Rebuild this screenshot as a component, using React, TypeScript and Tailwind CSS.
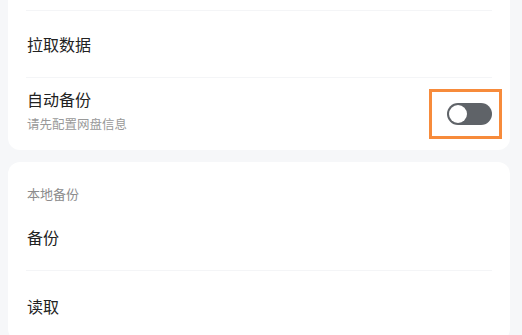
export default function App() {
  return (
    <div
      className="h-[335px] w-[522px] overflow-hidden bg-[#f6f7f9] pl-2 pr-3"
      style={{ fontFamily: '"Noto Sans CJK SC", "Noto Sans", sans-serif' }}
    >
      <div className="rounded-b-[12px] bg-white">
        <div className="h-[10px]" />
        <div className="mx-[18px] h-px bg-[#f4f5f7]" />
        <div className="flex h-[66px] items-center px-[19px] text-[16px] text-[#222]">拉取数据</div>
        <div className="mx-[18px] h-px bg-[#f4f5f7]" />
        <div className="flex h-[72px] justify-between pl-[19px] pr-[18px]">
          <div className="flex flex-col pt-[10px]">
            <span className="text-[16px] leading-[22px] text-[#222]">自动备份</span>
            <span className="mt-[5px] text-[12.5px] leading-[17px] text-[#999]">请先配置网盘信息</span>
          </div>
          <div className="relative self-center">
            <div className="relative h-[22px] w-[45px] rounded-full bg-[#5f6368]">
              <div className="absolute left-[2px] top-[2px] h-[18px] w-[18px] rounded-full bg-white" />
            </div>
            <div className="pointer-events-none absolute -bottom-[14px] -left-[18px] -right-[10px] -top-[14px] border-[3px] border-[#f78b3b]" />
          </div>
        </div>
      </div>

      <div className="mt-[12px] rounded-[12px] bg-white">
        <div className="px-[19px] pt-[23px] text-[13px] leading-[18px] text-[#8c8c8c]">本地备份</div>
        <div className="flex h-[67px] items-center px-[19px] text-[16px] text-[#222]">备份</div>
        <div className="mx-[18px] h-px bg-[#f4f5f7]" />
        <div className="flex h-[70px] items-center px-[19px] text-[16px] text-[#222]">读取</div>
      </div>
    </div>
  );
}
